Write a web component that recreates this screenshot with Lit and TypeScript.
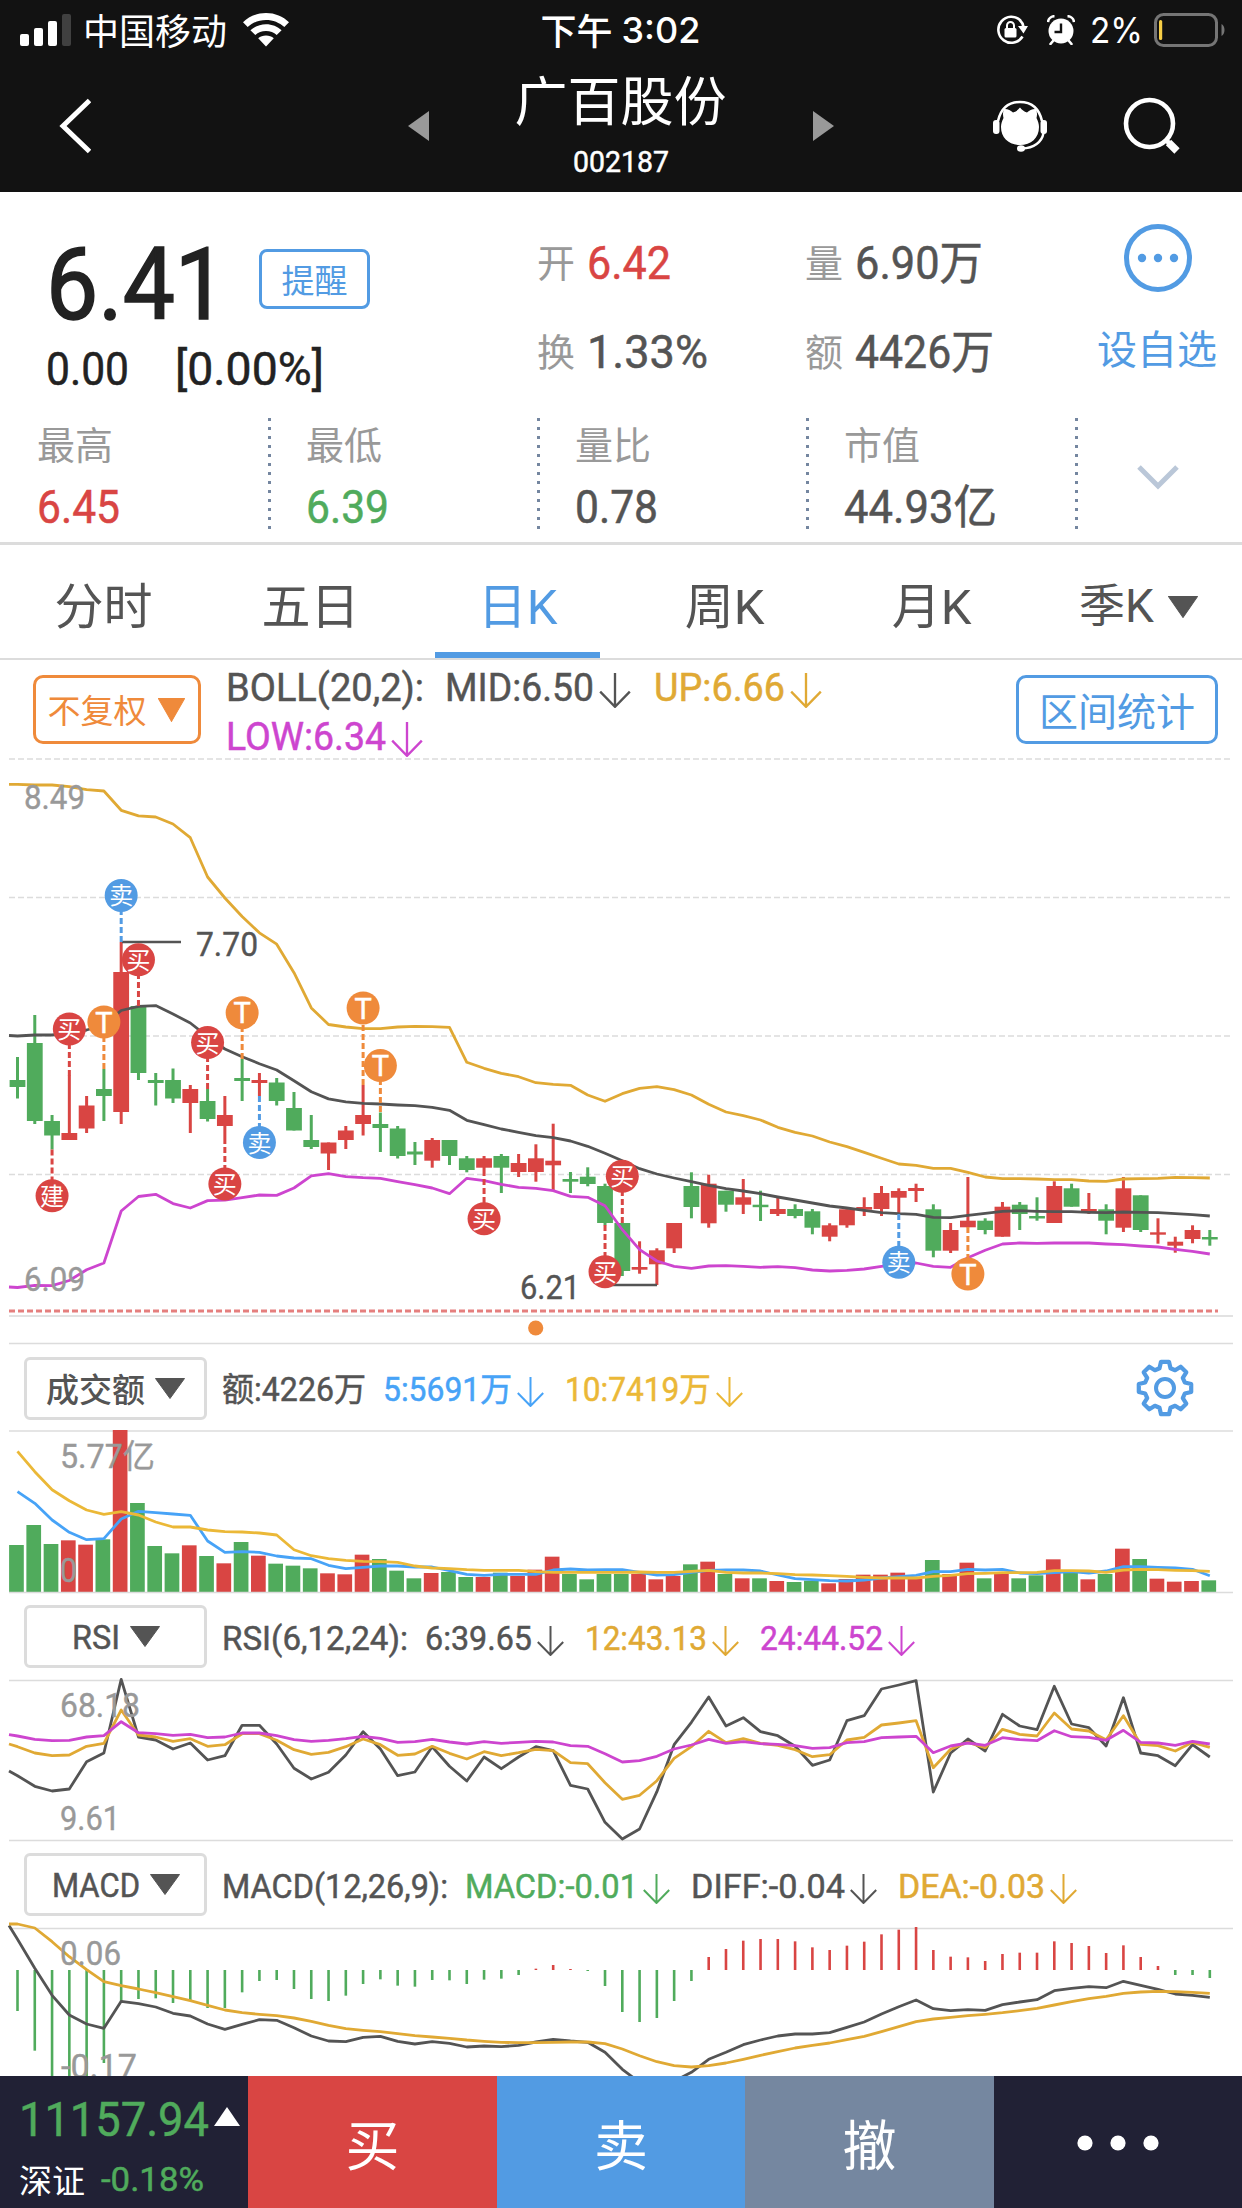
import { LitElement, html, svg, css } from "lit";
import { customElement } from "lit/decorators.js";

const RED = "#d94543";
const GREEN = "#50ab5c";
const BLUE = "#529be3";
const ORANGE = "#ef8a3b";
const GOLD = "#e0a934";
const AMBER = "#ebb837";
const SKY = "#47a3f7";
const VIOLET = "#cd45cf";
const INK = "#545454";

const STEP = 17.28;
const cx = (i: number) => 17.5 + STEP * i;

/* Each candle: direction, high, body top, body bottom, low. */
type Candle = [string, number, number, number, number];
const CANDLES: Candle[] = [
  ["g", 1057, 1080, 1087, 1098.5], ["g", 1015, 1043, 1121, 1124], ["g", 1115, 1121, 1135.5, 1149.5],
  ["r", 1075.5, 1133, 1140, 1140], ["r", 1096, 1105.5, 1128.5, 1133], ["g", 1069, 1089, 1096, 1121],
  ["r", 942, 972, 1112, 1124], ["g", 1006, 1006, 1073, 1080], ["g", 1073, 1080, 1083, 1105.5],
  ["g", 1068.5, 1080, 1098.5, 1103], ["r", 1085, 1089, 1103, 1133], ["g", 1089, 1101, 1119, 1121.5],
  ["r", 1096, 1115, 1126, 1138], ["g", 1059, 1078, 1081, 1101], ["r", 1073, 1080, 1083, 1096],
  ["g", 1078, 1082.5, 1101, 1105.5], ["g", 1092, 1108, 1130.5, 1130.5], ["g", 1115, 1140, 1147, 1149],
  ["r", 1142.5, 1142.5, 1153.5, 1170], ["r", 1126, 1130.5, 1140, 1149], ["r", 1085, 1115, 1124, 1135.5],
  ["g", 1112.5, 1124, 1128, 1152], ["g", 1126, 1128.5, 1156, 1158.5], ["g", 1142, 1151.5, 1154.5, 1165],
  ["r", 1138, 1140, 1160.7, 1167.7], ["g", 1140, 1140, 1156, 1165], ["g", 1156, 1158.3, 1170, 1172.3],
  ["r", 1156, 1158.3, 1167.7, 1170], ["g", 1154, 1156, 1167.7, 1193], ["r", 1154, 1163, 1172, 1177],
  ["r", 1144.3, 1158.3, 1172, 1181.7], ["r", 1123.7, 1160.7, 1165.3, 1190.7], ["g", 1172, 1179, 1181.7, 1193],
  ["g", 1167.3, 1176.7, 1184, 1186.3], ["g", 1183.7, 1186, 1223, 1225.3], ["g", 1223, 1223, 1271, 1276],
  ["r", 1241.3, 1267, 1269.7, 1273.7], ["r", 1248.3, 1250.3, 1264.3, 1285], ["r", 1223, 1223, 1248.3, 1253],
  ["g", 1172.3, 1186, 1207, 1218.3], ["r", 1174.7, 1183.7, 1223.3, 1227.7], ["g", 1190.7, 1190.7, 1204.7, 1211.7],
  ["r", 1179, 1197.3, 1204.7, 1214], ["g", 1190.7, 1204.7, 1207.2, 1221], ["r", 1197.3, 1209, 1214, 1216],
  ["g", 1204.3, 1209, 1216, 1218.3], ["g", 1209, 1211.3, 1227.7, 1234.3], ["r", 1223.3, 1225.3, 1236.7, 1241.3],
  ["r", 1209.3, 1209.3, 1225.3, 1227.7], ["r", 1197.3, 1207, 1209.7, 1216], ["r", 1186, 1193, 1209, 1216],
  ["r", 1188.3, 1191, 1197.7, 1213.7], ["r", 1183.7, 1188, 1191, 1202], ["g", 1204.3, 1209.3, 1250.7, 1257.3],
  ["r", 1223, 1230, 1250.7, 1253], ["r", 1177, 1220.7, 1227.3, 1227.3], ["g", 1218.3, 1220.7, 1230, 1234.3],
  ["r", 1202, 1206.7, 1236.7, 1236.7], ["g", 1202, 1204.7, 1214, 1230], ["g", 1197.3, 1216, 1218.5, 1220.7],
  ["r", 1181.3, 1186, 1223, 1223], ["g", 1183.7, 1188.3, 1206.7, 1206.7], ["r", 1193, 1209, 1211.7, 1214],
  ["g", 1204.3, 1209.3, 1220.7, 1234.3], ["r", 1177, 1188.3, 1227.7, 1232], ["g", 1195.3, 1195.3, 1230, 1232],
  ["r", 1218.3, 1232.3, 1234.7, 1243.7], ["r", 1236.7, 1241.7, 1245.7, 1252.7], ["r", 1225.3, 1230, 1239, 1243.3],
  ["g", 1230, 1237, 1239.5, 1245.7],
];

const UP = [784.4, 785, 785, 786.6, 789.6, 791, 810.3, 815.8, 817, 824, 837.7, 877, 898, 916.5, 932.8, 944.2, 972.7, 1007.9, 1024.5, 1027, 1028.6, 1028.6, 1027, 1026.3, 1026.7, 1027.3, 1062.3, 1068.3, 1073.3, 1076.7, 1082.7, 1084.3, 1085.3, 1095, 1101.3, 1093.7, 1088.3, 1086.7, 1089.7, 1095, 1104.3, 1112, 1115.7, 1120, 1127.3, 1132.3, 1136, 1142, 1146.7, 1152.3, 1158.3, 1164, 1165.3, 1168.3, 1168.3, 1172.3, 1177, 1178.7, 1178.7, 1179, 1179.7, 1179.7, 1181, 1181.3, 1179, 1178.7, 1178.3, 1177.3, 1177.7, 1178];
const MID = [1036, 1035, 1035, 1033, 1030, 1025, 1010.5, 1006.4, 1005.6, 1014, 1023, 1036.7, 1049, 1056.7, 1063.7, 1070, 1080.7, 1091.8, 1098.9, 1101.8, 1103.3, 1104, 1105, 1105.7, 1107.3, 1110.3, 1120.3, 1124.7, 1129, 1132.3, 1135.7, 1137.7, 1141, 1146.3, 1153.3, 1160.7, 1168.7, 1174, 1178, 1181.7, 1185.3, 1188.7, 1191, 1193.7, 1197, 1200, 1203, 1206, 1208, 1210.3, 1212.7, 1213.7, 1214.3, 1217.3, 1217.7, 1215.3, 1213.3, 1211.3, 1210.7, 1211.3, 1211.6, 1211.7, 1212.3, 1212.7, 1212, 1212.3, 1212.7, 1213.7, 1214.7, 1216];
const LOW = [1287.5, 1285.3, 1285.7, 1280.5, 1269.8, 1263, 1211, 1196.5, 1194.3, 1203.6, 1208, 1200.6, 1200.2, 1197.7, 1195, 1195.4, 1188, 1175.8, 1173.6, 1176.6, 1177.7, 1178.4, 1181.7, 1184.7, 1188, 1193.7, 1178.3, 1180.7, 1184.3, 1187.3, 1188.3, 1190.7, 1196.3, 1197.3, 1205.7, 1229.7, 1249.7, 1261, 1266.3, 1268.3, 1266, 1265.7, 1266.3, 1267.3, 1266.7, 1267.7, 1270, 1271, 1270.3, 1269, 1266.3, 1264, 1263, 1266.3, 1267.3, 1257.7, 1250.3, 1244, 1243, 1243.3, 1243, 1243, 1243, 1244, 1244.7, 1246, 1247, 1249.3, 1251.3, 1254];

/* The lower panels keep their samples in thirds of a pixel below the panel origin. */
const VOLUME = [645, 585, 642, 631, 644, 628, 300, 519, 648, 670, 646, 678, 700, 636, 677, 701, 707, 715, 730, 733, 674, 687, 722, 745, 729, 726, 741, 741, 728, 738, 719, 680, 732, 748, 732, 732, 732, 748, 738, 703, 695, 732, 745, 745, 753, 756, 752, 760, 747, 734, 734, 728, 745, 690, 732, 698, 745, 732, 745, 736, 688, 728, 748, 732, 656, 687, 746, 755, 753, 751];
const VOLUME_DIR = "gggrrgrgggrgrgrgggrrrggg" + "rggrgrrrggggrrrgrgrgrgg" + "rrrrrrgrrgrggrgrgrgrrrg";
const MA5 = [485, 520, 570, 607, 629, 626, 567, 544, 548, 552, 556, 633, 667, 665, 667, 678, 684, 686, 706, 716, 712, 708, 708, 711, 711, 722, 733, 736, 733, 733, 733, 720, 717, 720, 719, 719, 727, 735, 734, 727, 721, 720, 720, 723, 735, 746, 749, 752, 753, 750, 744, 740, 736, 725, 725, 718, 720, 718, 729, 731, 728, 725, 729, 723, 710, 710, 712, 714, 718, 737];
const MA10 = [364, 425, 479, 512, 540, 553, 545, 555, 576, 591, 591, 600, 605, 606, 609, 615, 659, 677, 686, 691, 694, 695, 697, 708, 714, 716, 719, 721, 721, 721, 725, 727, 727, 727, 727, 727, 726, 727, 727, 724, 721, 727, 729, 729, 731, 734, 735, 737, 739, 742, 744, 744, 744, 739, 736, 731, 730, 728, 728, 727, 722, 722, 723, 727, 720, 718, 719, 721, 722, 724];

const RSI6 = [527, 559, 573, 567, 485, 459, 238, 411, 420, 447, 429, 480, 467, 376, 376, 432, 505, 537, 517, 465, 395, 447, 527, 516, 440, 499, 543, 471, 506, 471, 440, 452, 556, 567, 667, 717, 687, 575, 434, 367, 291, 378, 353, 395, 407, 439, 496, 480, 362, 347, 267, 255, 242, 576, 459, 417, 453, 343, 378, 389, 259, 372, 383, 438, 293, 459, 467, 497, 434, 471];
const RSI12 = [440, 459, 467, 465, 439, 430, 330, 405, 411, 424, 416, 439, 434, 401, 401, 421, 449, 463, 457, 440, 417, 434, 466, 462, 439, 460, 477, 455, 467, 458, 448, 452, 488, 491, 548, 598, 586, 542, 475, 440, 394, 428, 416, 430, 436, 449, 470, 464, 420, 412, 375, 369, 362, 503, 448, 427, 443, 388, 403, 408, 339, 387, 393, 419, 347, 433, 437, 453, 427, 442];
const RSI24 = [408, 418, 422, 421, 411, 407, 365, 398, 401, 406, 403, 413, 411, 399, 399, 407, 419, 424, 421, 416, 409, 415, 427, 425, 418, 426, 432, 425, 430, 427, 424, 426, 437, 439, 461, 486, 482, 469, 447, 435, 418, 430, 425, 431, 433, 437, 445, 443, 428, 425, 413, 411, 409, 458, 438, 429, 436, 413, 419, 422, 392, 410, 412, 421, 391, 427, 429, 436, 424, 432];

const MACD = [483, 602, 700, 700, 680, 639, 455, 447, 445, 459, 450, 474, 474, 427, 393, 390, 417, 447, 453, 437, 402, 388, 407, 410, 390, 391, 402, 389, 386, 375, 356, 345, 357, 363, 408, 486, 516, 504, 453, 393, 321, 297, 272, 267, 267, 274, 292, 300, 287, 275, 253, 239, 231, 300, 320, 322, 333, 312, 308, 308, 274, 279, 288, 309, 286, 321, 348, 375, 375, 384];
const DIFF = [268, 355, 436, 495, 522, 535, 454, 461, 471, 490, 498, 522, 538, 523, 509, 511, 533, 558, 573, 575, 562, 559, 574, 582, 575, 580, 591, 588, 590, 586, 576, 568, 573, 577, 607, 658, 697, 708, 694, 667, 628, 607, 584, 570, 558, 552, 552, 548, 532, 516, 492, 470, 450, 476, 482, 479, 481, 464, 456, 449, 422, 415, 410, 413, 394, 406, 418, 432, 436, 442];
const DEA = [222, 234, 275, 320, 359, 395, 407, 417, 428, 440, 452, 466, 480, 488, 493, 497, 504, 514, 526, 536, 541, 545, 551, 557, 561, 565, 570, 574, 577, 578, 578, 577, 576, 576, 581, 597, 617, 635, 647, 651, 647, 639, 628, 616, 605, 594, 586, 579, 569, 559, 545, 530, 515, 507, 502, 497, 493, 488, 482, 475, 465, 455, 446, 439, 430, 426, 424, 425, 427, 430];

/* Trade markers: candle index, glyph, centre y, and the candle end its stem reaches. */
type Mark = [number, string, number, number];
const MARKS: Mark[] = [
  [6, "卖", 895.4, 942], [7, "买", 959.8, 1006], [3, "买", 1029, 1076], [5, "T", 1022, 1069],
  [11, "买", 1042.6, 1089], [13, "T", 1012.7, 1059], [20, "T", 1008, 1085], [21, "T", 1065.6, 1112],
  [2, "建", 1195.8, 1149.5], [12, "买", 1184, 1138], [14, "卖", 1142.5, 1096], [27, "买", 1218.7, 1170],
  [35, "买", 1176.3, 1223], [34, "买", 1271.7, 1225], [51, "卖", 1262.3, 1214], [55, "T", 1274, 1227],
];

const polyline = (ys: number[], color: string, lead?: number) => {
  const pts = ys.map((y, i) => `${cx(i).toFixed(1)},${y.toFixed(1)}`);
  if (lead !== undefined) pts.unshift(`9,${lead.toFixed(1)}`);
  return svg`<polyline points=${pts.join(" ")} fill="none" stroke=${color} stroke-width="2.8" stroke-linejoin="round"></polyline>`;
};
const thirds = (origin: number, vs: number[]) => vs.map((v) => origin + v / 3);

/* Numerals set to a fixed measure; the box is exactly the cap height of the text. */
const fit = (text: string, width: number, size: number, cls = "") => html`<svg
  class="fit ${cls}" width=${width} height=${size * 0.711}
><text x="0" y=${size * 0.711} font-size=${size} textLength=${width} lengthAdjust="spacingAndGlyphs">${text}</text></svg>`;

const axis = (text: string, x: number, y: number, width: number, cls = "axis") =>
  svg`<text class=${cls} x=${x} y=${y} textLength=${width} lengthAdjust="spacingAndGlyphs">${text}</text>`;

const down = (w = 27, h = 30) => html`<svg class="down" width=${w} height=${h} viewBox="0 0 27 30">
  <path d="M13.5 0V29M0.8 16L13.5 29L26.2 16" fill="none" stroke="currentColor" stroke-width="2"></path>
</svg>`;

const tri = (w: number, h: number) => html`<svg class="tri" width=${w} height=${h} viewBox="0 0 30 21" preserveAspectRatio="none">
  <path d="M0.5 0.5H29.5L15 20.5Z" fill="currentColor" stroke="currentColor" stroke-linejoin="round"></path>
</svg>`;

const gearPath = () => {
  const pts: string[] = [];
  for (let k = 0; k < 8; k++) {
    const a = (k * Math.PI) / 4;
    for (const [off, r] of [[-0.27, 20.5], [-0.15, 26.5], [0.15, 26.5], [0.27, 20.5]]) {
      pts.push(`${(30 + r * Math.sin(a + off)).toFixed(1)} ${(30 - r * Math.cos(a + off)).toFixed(1)}`);
    }
  }
  return `M${pts.join("L")}Z`;
};

@customElement("app-root")
export class AppRoot extends LitElement {
  static styles = css`
    :host { display: block; width: 1242px; height: 2208px; overflow: hidden; background: #fff; color: #545454;
      font-family: Roboto, "Noto Sans CJK SC", sans-serif; }
    * { box-sizing: border-box; }
    svg { display: block; flex: none; }
    .page { display: flex; flex-direction: column; height: 2208px; }
    .fit { overflow: visible; }
    .fit text { fill: currentColor; font-weight: 400; stroke: currentColor; stroke-width: 0.5px; }
    .fit.big text { stroke-width: 1.6px; }
    .fit.light text { stroke: none; }
    .cjk { font-family: "Noto Sans CJK SC", sans-serif; line-height: 1; white-space: nowrap; }
    .red { color: #d94543; } .green { color: #50ab5c; } .gold { color: #e0a934; } .amber { color: #ebb837; }
    .sky { color: #47a3f7; } .violet { color: #cd45cf; } .gray { color: #999; } .blue { color: #529be3; }

    .top { height: 192px; background: #121212; color: #fff; }
    .status { height: 60px; display: grid; grid-template-columns: 1fr auto 1fr; align-items: center; padding-left: 20px; padding-right: 16px;
      font-family: Inter, "Noto Sans CJK SC", sans-serif; font-size: 36px; }
    .status .left, .status .right { display: flex; align-items: center; }
    .status .right { justify-content: flex-end; }
    .carrier { margin: 0 16px 2px 12px; }
    .clock { font-weight: 500; display: flex; gap: 9px; align-items: center; margin-right: 5px; }
    .clock .cjk { margin-bottom: 2px; }
    .lock { margin-right: 19px; } .alarm { margin-right: 15px; } .pct { margin-right: 11px; }
    .nav { height: 132px; display: grid; grid-template-columns: 408px 426px 159px 1fr; }
    .back { padding: 37px 0 0 59px; }
    .switcher { display: grid; grid-template-columns: 21px 1fr 21px; }
    .switcher > svg { margin-top: 51px; }
    .title { display: flex; flex-direction: column; align-items: center; padding-right: 1px; }
    .name { font-size: 53px; margin-top: 12px; margin-bottom: 26px; }
    .tools { grid-column: 4; display: flex; }
    .agent { margin-top: 40px; } .search { margin: 35px 0 0 74px; }

    .quote { height: 353px; border-bottom: 3px solid #dcdcdc; }
    .head { display: grid; grid-template-columns: 538px 268px 268px 168px; height: 226px; }
    .price { padding: 56px 0 0 46px; color: #222; }
    .priceline { display: flex; width: 324px; justify-content: space-between; }
    .remind { width: 111px; height: 60px; border: 3px solid #529be3; border-radius: 8px; color: #529be3; margin-top: 1px;
      display: flex; align-items: center; justify-content: center; font-size: 33px; }
    .chg { display: flex; margin-top: 33px; gap: 46px; }
    .pairs { display: flex; flex-direction: column; gap: 56px; padding-top: 54px; }
    .pair { display: flex; align-items: center; gap: 12px; height: 33px; font-size: 38px; }
    .pair .cjk { margin-bottom: 3px; margin-left: -1px; }
    .fav { display: flex; flex-direction: column; align-items: center; padding-top: 32px; color: #529be3; font-size: 40px; gap: 35px; }
    .fav .cjk { margin-right: 2px; }
    .facts { display: grid; grid-template-columns: 271px repeat(3, 269px) 1fr; height: 111px; }
    .fact { padding: 6px 0 0 35px; font-size: 38px; background: repeating-linear-gradient(#7486a0 0 3px, transparent 3px 9px) right 0 top 0 / 3px 100% no-repeat; }
    .fact:first-child { padding-left: 37px; }
    .fact .fit { margin-top: 28px; }
    .more { display: flex; justify-content: center; padding-top: 46px; padding-right: 4px; }

    .tabs { display: grid; grid-template-columns: repeat(6, 207px); height: 115px; border-bottom: 2px solid #dcdcdc; }
    .tab { position: relative; display: flex; align-items: center; justify-content: center; font-size: 49px; padding-top: 1px;
      font-family: Roboto, "Noto Sans CJK SC", sans-serif; }
    .tab.on { color: #529be3; }
    .tab.on::after { content: ""; position: absolute; left: 21px; right: 21px; bottom: 0; height: 6px; background: #529be3; }
    .tab .tri { margin-left: 14px; margin-top: 10px; }
    .tab.small { font-size: 46px; }

    .boll { height: 97px; display: flex; }
    .adjust { width: 168px; height: 69px; margin: 15px 0 0 33px; border: 3px solid #ef8a3b; border-radius: 10px; color: #ef8a3b;
      display: flex; align-items: center; justify-content: center; gap: 11px; font-size: 33px; padding-right: 2px; }
    .lines { width: 790px; margin-left: 25px; padding-top: 14px; display: flex; flex-direction: column; gap: 22px; }
    .line { display: flex; height: 27px; }
    .line .down { margin: -1px 23px 0 5px; }
    .line .first { margin-right: 21px; }
    .range { width: 202px; height: 69px; margin-top: 15px; border: 3px solid #529be3; border-radius: 10px; color: #529be3;
      display: flex; align-items: center; justify-content: center; font-size: 39px; }

    .bar { display: flex; height: 86px; padding-top: 12px; padding-left: 24px; }
    .bar.low { height: 87px; }
    .pick { width: 183px; height: 63px; border: 3px solid #dcdcdc; border-radius: 6px; display: flex; align-items: center; justify-content: center; gap: 10px; font-size: 33px; font-weight: 500; }
    .low .pick .fit { margin-top: 2px; }
    .legend { display: flex; margin-left: 15px; padding-top: 21px; width: 913px; }
    .low .legend { padding-top: 22px; }
    .legend .down { margin: -1px 21px 0 5px; }
    .gap { width: 17px; }
    .gear { margin-top: 1px; }

    .axis { fill: #999; font-size: 33px; stroke: #999; stroke-width: 0.4px; }
    .note { fill: #545454; font-size: 33px; stroke: #545454; stroke-width: 0.4px; }
    .markt { fill: #fff; font-size: 24px; text-anchor: middle; font-family: "Noto Sans CJK SC", sans-serif; }
    .markT { fill: #fff; font-size: 29px; text-anchor: middle; font-weight: 400; stroke: #fff; stroke-width: 0.5px; }

    .trade { display: grid; grid-template-columns: repeat(5, 1fr); height: 132px; color: #fff; background: #212135; }
    .cell { display: flex; align-items: center; justify-content: center; font-size: 54px; padding-top: 1px; }
    .index { display: flex; flex-direction: column; padding: 26px 0 0 19px; }
    .row { display: flex; }
    .row.two { align-items: center; margin-top: 27px; gap: 16px; font-size: 33px; }
    .caret { margin: 5px 0 0 5px; }
    .buy { background: #d94543; } .sell { background: #529be3; } .undo { background: #7587a0; }
  `;

  private marker([i, glyph, y, end]: Mark) {
    const color = glyph === "T" ? ORANGE : glyph === "卖" ? BLUE : RED;
    const x = cx(i);
    return svg`
      <line x1=${x} x2=${x} y1=${end} y2=${y} stroke=${color} stroke-width="3" stroke-dasharray="6 3"></line>
      <circle cx=${x} cy=${y} r="16.5" fill=${color}></circle>
      ${glyph === "T"
        ? svg`<text class="markT" x=${x} y=${y + 10.5}>T</text>`
        : svg`<text class="markt" x=${x} y=${y + 9}>${glyph}</text>`}`;
  }

  private candles() {
    return svg`
      ${[759, 897.5, 1036, 1174.5].map((y) => svg`<line x1="9" x2="1231" y1=${y} y2=${y} stroke="#dcdcdc" stroke-width="1.6" stroke-dasharray="6 3"></line>`)}
      ${CANDLES.map(([d, hi, t, b, lo], i) => svg`<g fill=${d === "r" ? RED : GREEN}>
        <rect x=${cx(i) - 1.5} y=${hi} width="3" height=${lo - hi}></rect>
        <rect x=${cx(i) - 7.9} y=${t} width="15.8" height=${b - t}></rect></g>`)}
      ${polyline(UP, GOLD, 784.4)}${polyline(MID, INK, 1035.5)}${polyline(LOW, VIOLET, 1287)}
      <path d="M122 942H181M612 1285H657" stroke=${INK} stroke-width="2.6"></path>
      ${MARKS.map((m) => this.marker(m))}
      ${axis("8.49", 24, 809, 61)}${axis("6.09", 24, 1291, 61)}
      ${axis("7.70", 196, 955.5, 62, "note")}${axis("6.21", 520, 1299, 60, "note")}
      <line x1="9" x2="1218" y1="1311" y2="1311" stroke="#e57f7e" stroke-width="3" stroke-dasharray="6 3"></line>
      <line x1="9" x2="1233" y1="1316" y2="1316" stroke="#e2e2e2" stroke-width="2"></line>
      <circle cx="535.7" cy="1328" r="7.6" fill=${ORANGE}></circle>
      <line x1="9" x2="1233" y1="1343.5" y2="1343.5" stroke="#dcdcdc" stroke-width="1.6"></line>`;
  }

  private rule(y: number) {
    return svg`<line x1="9" x2="1233" y1=${y} y2=${y} stroke="#dcdcdc" stroke-width="1.6"></line>`;
  }

  render() {
    return html`<div class="page">
      <div class="top">
        <div class="status">
          <div class="left">
            <svg width="51" height="32" viewBox="0 0 51 32"><g fill="#fff"><rect x="0" y="20" width="9" height="12" rx="2"></rect><rect x="14" y="14" width="9" height="18" rx="2"></rect><rect x="28" y="7" width="9" height="25" rx="2"></rect><rect x="42" y="0" width="9" height="32" rx="2" fill="#404040"></rect></g></svg>
            <span class="carrier cjk">中国移动</span>
            <svg width="46" height="34" viewBox="0 0 46 34"><g fill="#fff"><path d="M23 0C32 0 40 3.400 46 9.200L41.300 14C36.500 9.500 30 6.900 23 6.900S9.500 9.500 4.700 14L0 9.200C6 3.400 14 0 23 0Z"></path><path d="M23 11.200C29 11.200 34.500 13.500 38.600 17.200L33.700 22C30.900 19.500 27.200 18 23 18S15.100 19.500 12.300 22L7.400 17.200C11.500 13.500 17 11.200 23 11.200Z"></path><path d="M23 22.500C26 22.500 28.700 23.500 30.800 25.300L23 33.500L15.200 25.300C17.300 23.500 20 22.500 23 22.500Z"></path></g></svg>
          </div>
          <div class="clock"><span class="cjk">下午</span><span>3:02</span></div>
          <div class="right">
            <svg class="lock" width="32" height="30" viewBox="0 0 32 30"><path d="M24.500 5.500A13 13 0 1 0 26.500 21.500" fill="none" stroke="#fff" stroke-width="2.600"></path><path d="M22 11H32L27.500 18.500Z" fill="#fff"></path><path d="M24 5.200Q27 8 27.500 12" fill="none" stroke="#fff" stroke-width="2.600"></path><rect x="8.500" y="13" width="12" height="9.500" rx="1.500" fill="#fff"></rect><path d="M11 13V10.500A3.500 3.500 0 0 1 18 10.500V13" fill="none" stroke="#fff" stroke-width="2"></path></svg>
            <svg class="alarm" width="28" height="30" viewBox="0 0 28 30"><circle cx="14" cy="16" r="12.500" fill="#fff"></circle><path d="M14 8.500V17H7.500" fill="none" stroke="#121212" stroke-width="2.400"></path><path d="M1 7A6.500 6.500 0 0 1 7.500 1.200M27 7A6.500 6.500 0 0 0 20.500 1.200" fill="none" stroke="#fff" stroke-width="2.600"></path><path d="M6 26L3.500 29M22 26L24.500 29" stroke="#fff" stroke-width="2.600" stroke-linecap="round"></path></svg>
            <span class="pct">${fit("2%", 53, 36, "light")}</span>
            <svg width="72" height="34" viewBox="0 0 72 34"><rect x="1.500" y="1.500" width="61" height="31" rx="8" fill="none" stroke="#757575" stroke-width="3"></rect><rect x="5" y="7" width="3.200" height="20" rx="1.500" fill="#f7ce46"></rect><path d="M67.500 11C71.500 13 71.500 21 67.500 23Z" fill="#757575"></path></svg>
          </div>
        </div>
        <div class="nav">
          <div class="back"><svg width="32" height="58" viewBox="0 0 32 58"><path d="M30.500 3.500L4 29L30.500 54.500" fill="none" stroke="#fff" stroke-width="5"></path></svg></div>
          <div class="switcher">
            <svg width="21" height="30" viewBox="0 0 21 30"><path d="M0 15L21 0V30Z" fill="#999"></path></svg>
            <div class="title"><span class="name cjk">广百股份</span>${fit("002187", 96, 30)}</div>
            <svg width="21" height="30" viewBox="0 0 21 30"><path d="M21 15L0 0V30Z" fill="#999"></path></svg>
          </div>
          <div class="tools">
            <svg class="agent" width="54" height="53" viewBox="0 0 54 53">
              <path d="M5 21C8 8 16 2 27 2S46 8 49 21" fill="none" stroke="#fff" stroke-width="2.600"></path>
              <rect x="0" y="20" width="6.500" height="14" rx="3" fill="#fff"></rect><rect x="47.500" y="20" width="6.500" height="14" rx="3" fill="#fff"></rect>
              <path d="M11 9C14 8.500 18 10.500 20 12.500C23 11.500 25 10 27 7.500C29 10 31 11.500 34 12.500C36 10.500 40 8.500 43 9C44.500 13 44 16 43.500 18C45 21 46 24 46 27C46 38 38 45 27 45S8 38 8 27C8 24 9 21 10.500 18C10 16 9.500 13 11 9Z" fill="#fff"></path>
              <path d="M50.500 33C49 42 41 48 29 48.500" fill="none" stroke="#fff" stroke-width="2.400"></path><ellipse cx="28" cy="48.500" rx="4" ry="3.200" fill="#fff"></ellipse>
            </svg>
            <svg class="search" width="60" height="60" viewBox="0 0 60 60"><circle cx="28.500" cy="28.500" r="23.500" fill="none" stroke="#fff" stroke-width="4.600"></circle><path d="M44 44L48 48" stroke="#fff" stroke-width="4.600"></path><path d="M47.500 47.500L56 56" stroke="#fff" stroke-width="7.500"></path></svg>
          </div>
        </div>
      </div>

      <div class="quote">
        <div class="head">
          <div class="price">
            <div class="priceline">${fit("6.41", 181, 100, "big")}<div class="remind cjk">提醒</div></div>
            <div class="chg">${fit("0.00", 83, 46)}${fit("[0.00%]", 149, 46)}</div>
          </div>
          <div class="pairs">
            <div class="pair"><span class="cjk gray">开</span>${fit("6.42", 84, 46, "red")}</div>
            <div class="pair"><span class="cjk gray">换</span>${fit("1.33%", 121, 46)}</div>
          </div>
          <div class="pairs">
            <div class="pair"><span class="cjk gray">量</span>${fit("6.90万", 128, 46)}</div>
            <div class="pair"><span class="cjk gray">额</span>${fit("4426万", 139, 46)}</div>
          </div>
          <div class="fav">
            <svg width="68" height="68" viewBox="0 0 68 68"><circle cx="34" cy="34" r="31.500" fill="none" stroke="#529be3" stroke-width="5"></circle><g fill="#529be3"><circle cx="18" cy="34" r="4.200"></circle><circle cx="34" cy="34" r="4.200"></circle><circle cx="50" cy="34" r="4.200"></circle></g></svg>
            <span class="cjk">设自选</span>
          </div>
        </div>
        <div class="facts">
          <div class="fact"><div class="cjk gray">最高</div>${fit("6.45", 83, 46, "red")}</div>
          <div class="fact"><div class="cjk gray">最低</div>${fit("6.39", 83, 46, "green")}</div>
          <div class="fact"><div class="cjk gray">量比</div>${fit("0.78", 83, 46)}</div>
          <div class="fact"><div class="cjk gray">市值</div>${fit("44.93亿", 153, 46)}</div>
          <div class="more"><svg width="44" height="28" viewBox="0 0 44 28"><path d="M3 3L22 22L41 3" fill="none" stroke="#bac7d8" stroke-width="5"></path></svg></div>
        </div>
      </div>

      <div class="tabs">
        <div class="tab">分时</div><div class="tab">五日</div>
        <div class="tab on">日K</div><div class="tab">周K</div><div class="tab">月K</div>
        <div class="tab small">季K${tri(30, 22)}</div>
      </div>

      <div class="boll">
        <div class="adjust cjk">不复权${tri(27, 24)}</div>
        <div class="lines">
          <div class="line"><span class="first">${fit("BOLL(20,2):", 198, 38)}</span>${fit("MID:6.50", 149, 38)}${down(32, 35)}
            <span class="gold">${fit("UP:6.66", 131, 38)}</span><span class="gold">${down(32, 35)}</span></div>
          <div class="line violet">${fit("LOW:6.34", 160, 38)}${down(32, 35)}</div>
        </div>
        <div class="range cjk">区间统计</div>
      </div>

      <svg width="1242" height="588" viewBox="0 757 1242 588">${this.candles()}</svg>

      <div class="bar">
        <div class="pick cjk">成交额${tri(30, 21)}</div>
        <div class="legend">${fit("额:4226万", 144, 33)}<span class="gap"></span>
          <span class="sky">${fit("5:5691万", 129, 33)}</span><span class="sky">${down()}</span>
          <span class="amber">${fit("10:7419万", 146, 33)}</span><span class="amber">${down()}</span></div>
        <svg class="gear" width="60" height="60" viewBox="0 0 60 60"><path d=${gearPath()} fill="none" stroke="#529be3" stroke-width="4.200" stroke-linejoin="round"></path><circle cx="30" cy="30" r="9" fill="none" stroke="#529be3" stroke-width="4"></circle></svg>
      </div>
      <svg width="1242" height="162" viewBox="0 1431 1242 162" overflow="visible">
        ${this.rule(1431)}
        ${VOLUME.map((v, i) => svg`<rect x=${9.1 + STEP * i} y=${1330 + v / 3} width="14.700" height=${262 - v / 3} fill=${VOLUME_DIR[i] === "r" ? RED : GREEN}></rect>`)}
        ${polyline(thirds(1330, MA5), SKY)}${polyline(thirds(1330, MA10), AMBER)}
        ${this.rule(1592.5)}
        ${axis("5.77亿", 60, 1468, 95)}${axis("0", 60, 1582, 17)}
      </svg>

      <div class="bar low">
        <div class="pick">${fit("RSI", 48, 33)}${tri(30, 21)}</div>
        <div class="legend">${fit("RSI(6,12,24):", 186, 33)}<span class="gap"></span>
          ${fit("6:39.65", 107, 33)}${down()}
          <span class="gold">${fit("12:43.13", 122, 33)}</span><span class="gold">${down()}</span>
          <span class="violet">${fit("24:44.52", 123, 33)}</span><span class="violet">${down()}</span></div>
      </div>
      <svg width="1242" height="161" viewBox="0 1680 1242 161" overflow="visible">
        ${this.rule(1680.5)}${this.rule(1840.5)}
        ${polyline(thirds(1600, RSI6), INK, 1771)}${polyline(thirds(1600, RSI12), GOLD, 1744)}${polyline(thirds(1600, RSI24), VIOLET, 1734.7)}
        ${axis("68.18", 60, 1716.5, 80)}${axis("9.61", 60, 1830, 60)}
      </svg>

      <div class="bar low">
        <div class="pick">${fit("MACD", 88, 33)}${tri(30, 21)}</div>
        <div class="legend">${fit("MACD(12,26,9):", 226, 33)}<span class="gap"></span>
          <span class="green">${fit("MACD:-0.01", 173, 33)}</span><span class="green">${down()}</span>
          ${fit("DIFF:-0.04", 154, 33)}${down()}
          <span class="gold">${fit("DEA:-0.03", 147, 33)}</span><span class="gold">${down()}</span></div>
      </div>
      <svg width="1242" height="148" viewBox="0 1928 1242 148" overflow="visible">
        ${this.rule(1928.5)}
        ${MACD.map((v, i) => svg`<line x1=${cx(i)} x2=${cx(i)} y1="1970" y2=${Math.min(2076, 1850 + v / 3)} stroke=${v < 360 ? RED : GREEN} stroke-width="2.600"></line>`)}
        ${polyline(thirds(1850, DIFF), INK, 1925.5)}${polyline(thirds(1850, DEA), GOLD, 1924)}
        ${axis("0.06", 60, 1965, 61)}${axis("-0.17", 61, 2078, 76)}
      </svg>

      <div class="trade">
        <div class="index">
          <div class="row green">${fit("11157.94", 190, 48)}<svg class="caret" width="26" height="19" viewBox="0 0 26 19"><path d="M13 0L26 19H0Z" fill="#fff"></path></svg></div>
          <div class="row two"><span class="cjk">深证</span><span class="green">${fit("-0.18%", 103, 33)}</span></div>
        </div>
        <div class="cell buy cjk">买</div><div class="cell sell cjk">卖</div><div class="cell undo cjk">撤</div>
        <div class="cell"><svg width="82" height="16" viewBox="0 0 82 16"><g fill="#fff"><circle cx="8" cy="8" r="7.600"></circle><circle cx="41" cy="8" r="7.600"></circle><circle cx="74" cy="8" r="7.600"></circle></g></svg></div>
      </div>
    </div>`;
  }
}
